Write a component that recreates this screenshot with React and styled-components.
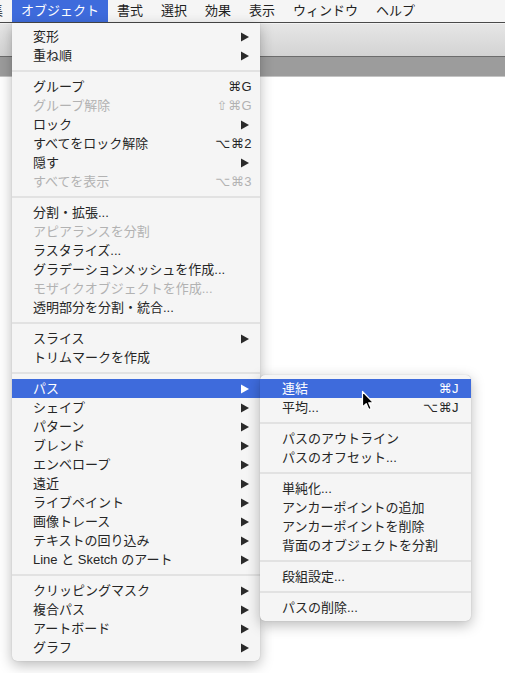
import React from 'react'
import styled, { createGlobalStyle } from 'styled-components'

const GlobalStyle = createGlobalStyle`
body {
  margin: 0;
  background: #ffffff;
  font-family: "Liberation Sans", "Noto Sans CJK JP", "DejaVu Sans", sans-serif;
}
`

const Screen = styled.div`
position: relative;
width: 505px;
height: 673px;
overflow: hidden;
background: #ffffff;
`

const MenuBar = styled.div`
height: 22px;
background: #f5f5f5;
border-bottom: 1px solid #4a4a4a;
overflow: hidden;
`

const BarItems = styled.div`
display: flex;
margin-left: -32px;
`

const BarItem = styled.div`
height: 22px;
line-height: 22px;
padding: 0 9px;
font-size: 13px;
color: ${p => (p.active ? '#ffffff' : '#222222')};
background: ${p => (p.active ? '#3e6bdc' : 'transparent')};
white-space: nowrap;
`

const Toolbar = styled.div`
height: 34px;
background: linear-gradient(#e6e6e6, #d3d3d3);
border-top: 1px solid #f2f2f2;
border-bottom: 1px solid #6c6c6c;
box-sizing: border-box;
`

const ToolStrip = styled.div`
height: 19px;
background: #9c9c9c;
border-bottom: 1px solid #c4c4c4;
`

const Dropdown = styled.div`
position: absolute;
left: ${p => p.left}px;
top: ${p => p.top}px;
width: ${p => p.width}px;
padding: 4px 0;
background: #f5f5f5;
border-radius: ${p => (p.sub ? '5px' : '0 0 5px 5px')};
box-shadow: 0 4px 14px rgba(0, 0, 0, 0.28), 0 0 1px rgba(0, 0, 0, 0.25);
z-index: ${p => (p.sub ? 3 : 2)};
`

const Row = styled.div`
display: flex;
align-items: center;
justify-content: space-between;
height: 19px;
line-height: 19px;
padding: ${p => (p.sub ? '0 12px 0 22px' : '0 8px 0 21px')};
font-size: 13px;
white-space: nowrap;
color: ${p => (p.active ? '#ffffff' : p.disabled ? '#b2b2b2' : '#262626')};
background: ${p => (p.active ? '#3e6bdc' : 'transparent')};
`

const Shortcut = styled.span`
font-family: "Liberation Sans", "DejaVu Sans", "Noto Sans CJK JP", sans-serif;
letter-spacing: 0.5px;
`

const Arrow = styled.svg`
width: 8px;
height: 10px;
margin-right: 3px;
fill: ${p => (p.active ? '#ffffff' : '#2a2a2a')};
`

const Separator = styled.div`
height: 2px;
margin: 5px 0;
background: #e2e2e2;
`

const Cursor = styled.svg`
position: absolute;
left: 361px;
top: 390px;
width: 14px;
height: 22px;
z-index: 4;
`

const mainMenu = [
  [
    { label: '変形', sub: true },
    { label: '重ね順', sub: true },
  ],
  [
    { label: 'グループ', key: '⌘G' },
    { label: 'グループ解除', key: '⇧⌘G', disabled: true },
    { label: 'ロック', sub: true },
    { label: 'すべてをロック解除', key: '⌥⌘2' },
    { label: '隠す', sub: true },
    { label: 'すべてを表示', key: '⌥⌘3', disabled: true },
  ],
  [
    { label: '分割・拡張...' },
    { label: 'アピアランスを分割', disabled: true },
    { label: 'ラスタライズ...' },
    { label: 'グラデーションメッシュを作成...' },
    { label: 'モザイクオブジェクトを作成...', disabled: true },
    { label: '透明部分を分割・統合...' },
  ],
  [
    { label: 'スライス', sub: true },
    { label: 'トリムマークを作成' },
  ],
  [
    { label: 'パス', sub: true, active: true },
    { label: 'シェイプ', sub: true },
    { label: 'パターン', sub: true },
    { label: 'ブレンド', sub: true },
    { label: 'エンベロープ', sub: true },
    { label: '遠近', sub: true },
    { label: 'ライブペイント', sub: true },
    { label: '画像トレース', sub: true },
    { label: 'テキストの回り込み', sub: true },
    { label: 'Line と Sketch のアート', sub: true },
  ],
  [
    { label: 'クリッピングマスク', sub: true },
    { label: '複合パス', sub: true },
    { label: 'アートボード', sub: true },
    { label: 'グラフ', sub: true },
  ],
]

const pathMenu = [
  [
    { label: '連結', key: '⌘J', active: true },
    { label: '平均...', key: '⌥⌘J' },
  ],
  [
    { label: 'パスのアウトライン' },
    { label: 'パスのオフセット...' },
  ],
  [
    { label: '単純化...' },
    { label: 'アンカーポイントの追加' },
    { label: 'アンカーポイントを削除' },
    { label: '背面のオブジェクトを分割' },
  ],
  [{ label: '段組設定...' }],
  [{ label: 'パスの削除...' }],
]

const barLabels = ['編集', 'オブジェクト', '書式', '選択', '効果', '表示', 'ウィンドウ', 'ヘルプ']

function MenuList({ groups, sub }) {
  return groups.map((group, gi) => (
    <React.Fragment key={gi}>
      {gi > 0 && <Separator />}
      {group.map(item => (
        <Row key={item.label} sub={sub} active={item.active} disabled={item.disabled}>
          <span>{item.label}</span>
          {item.key && <Shortcut>{item.key}</Shortcut>}
          {item.sub && (
            <Arrow active={item.active} viewBox="0 0 8 10">
              <polygon points="0,0.5 8,5 0,9.5" />
            </Arrow>
          )}
        </Row>
      ))}
    </React.Fragment>
  ))
}

export default function App() {
  return (
    <Screen>
      <GlobalStyle />
      <MenuBar>
        <BarItems>
          {barLabels.map(label => (
            <BarItem key={label} active={label === 'オブジェクト'}>{label}</BarItem>
          ))}
        </BarItems>
      </MenuBar>
      <Toolbar />
      <ToolStrip />

      <Dropdown left={12} top={23} width={248}>
        <MenuList groups={mainMenu} />
      </Dropdown>

      <Dropdown sub left={260} top={375} width={211}>
        <MenuList groups={pathMenu} sub />
      </Dropdown>

      <Cursor viewBox="0 0 14 22">
        <path d="M1.5 1.5 L1.5 17 L5.2 13.6 L7.8 19.6 L10.2 18.6 L7.7 12.8 L12.5 12.8 Z"
              fill="#000" stroke="#fff" strokeWidth="1.2" strokeLinejoin="round" />
      </Cursor>
    </Screen>
  )
}
